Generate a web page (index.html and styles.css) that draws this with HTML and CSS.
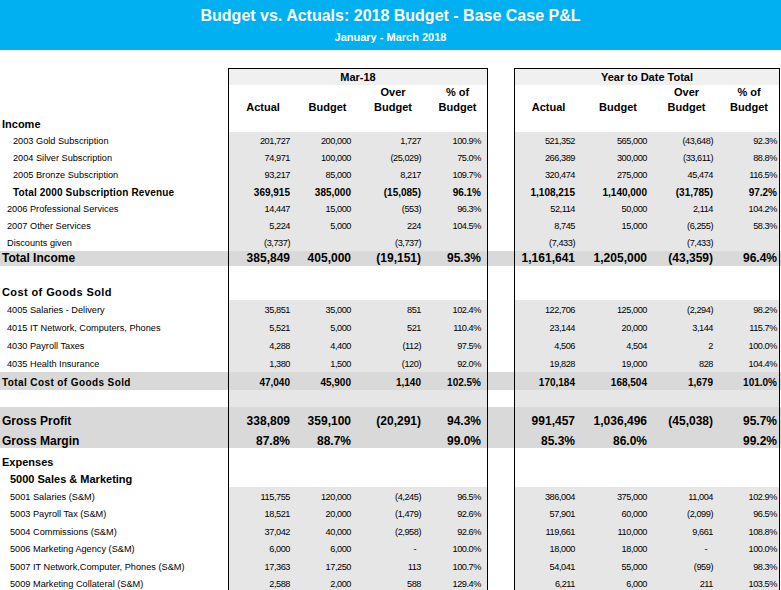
FILE: index.html
```html
<!DOCTYPE html>
<html lang="en">
<head>
<meta charset="utf-8">
<title>Budget vs. Actuals</title>
<link rel="stylesheet" href="styles.css">
</head>
<body>
<header class="banner">
  <h1>Budget vs. Actuals: 2018 Budget - Base Case P&amp;L</h1>
  <p>January - March 2018</p>
</header>
<main class="sheet">
  <div class="row h1row">
    <div class="lab"></div>
    <div class="box b1 top"><span class="span">Mar-18</span></div>
    <div class="gap"></div>
    <div class="box b2 top"><span class="span">Year to Date Total</span></div>
  </div>
  <div class="row h2row">
    <div class="lab"></div>
    <div class="box b1"><span>Actual</span><span>Budget</span><span>Over<br>Budget</span><span>% of<br>Budget</span></div>
    <div class="gap"></div>
    <div class="box b2"><span>Actual</span><span>Budget</span><span>Over<br>Budget</span><span>% of<br>Budget</span></div>
  </div>
  <div class="row r17 sect">
    <div class="lab i0">Income</div>
    <div class="box b1"></div><div class="gap"></div><div class="box b2"></div>
  </div>
  <div class="row r17 data">
    <div class="lab i3">2003 Gold Subscription</div>
    <div class="box b1"><span>201,727</span><span>200,000</span><span>1,727</span><span>100.9%</span></div>
    <div class="gap"></div>
    <div class="box b2"><span>521,352</span><span>565,000</span><span>(43,648)</span><span>92.3%</span></div>
  </div>
  <div class="row r17 data">
    <div class="lab i3">2004 Silver Subscription</div>
    <div class="box b1"><span>74,971</span><span>100,000</span><span>(25,029)</span><span>75.0%</span></div>
    <div class="gap"></div>
    <div class="box b2"><span>266,389</span><span>300,000</span><span>(33,611)</span><span>88.8%</span></div>
  </div>
  <div class="row r17 data">
    <div class="lab i3">2005 Bronze Subscription</div>
    <div class="box b1"><span>93,217</span><span>85,000</span><span>8,217</span><span>109.7%</span></div>
    <div class="gap"></div>
    <div class="box b2"><span>320,474</span><span>275,000</span><span>45,474</span><span>116.5%</span></div>
  </div>
  <div class="row r17 data sub">
    <div class="lab i3">Total 2000 Subscription Revenue</div>
    <div class="box b1"><span>369,915</span><span>385,000</span><span>(15,085)</span><span>96.1%</span></div>
    <div class="gap"></div>
    <div class="box b2"><span>1,108,215</span><span>1,140,000</span><span>(31,785)</span><span>97.2%</span></div>
  </div>
  <div class="row r17 data">
    <div class="lab i1">2006 Professional Services</div>
    <div class="box b1"><span>14,447</span><span>15,000</span><span>(553)</span><span>96.3%</span></div>
    <div class="gap"></div>
    <div class="box b2"><span>52,114</span><span>50,000</span><span>2,114</span><span>104.2%</span></div>
  </div>
  <div class="row r17 data">
    <div class="lab i1">2007 Other Services</div>
    <div class="box b1"><span>5,224</span><span>5,000</span><span>224</span><span>104.5%</span></div>
    <div class="gap"></div>
    <div class="box b2"><span>8,745</span><span>15,000</span><span>(6,255)</span><span>58.3%</span></div>
  </div>
  <div class="row r17 data">
    <div class="lab i1">Discounts given</div>
    <div class="box b1"><span>(3,737)</span><span></span><span>(3,737)</span><span></span></div>
    <div class="gap"></div>
    <div class="box b2"><span>(7,433)</span><span></span><span>(7,433)</span><span></span></div>
  </div>
  <div class="row r15 tot big">
    <div class="lab i0">Total Income</div>
    <div class="box b1"><span>385,849</span><span>405,000</span><span>(19,151)</span><span>95.3%</span></div>
    <div class="gap"></div>
    <div class="box b2"><span>1,161,641</span><span>1,205,000</span><span>(43,359)</span><span>96.4%</span></div>
  </div>
  <div class="row r17">
    <div class="lab"></div>
    <div class="box b1"></div><div class="gap"></div><div class="box b2"></div>
  </div>
  <div class="row r17 sect">
    <div class="lab i0 wide">Cost of Goods Sold</div>
    <div class="box b1"></div><div class="gap"></div><div class="box b2"></div>
  </div>
  <div class="row r18 data">
    <div class="lab i1">4005 Salaries - Delivery</div>
    <div class="box b1"><span>35,851</span><span>35,000</span><span>851</span><span>102.4%</span></div>
    <div class="gap"></div>
    <div class="box b2"><span>122,706</span><span>125,000</span><span>(2,294)</span><span>98.2%</span></div>
  </div>
  <div class="row r18 data">
    <div class="lab i1">4015 IT Network, Computers, Phones</div>
    <div class="box b1"><span>5,521</span><span>5,000</span><span>521</span><span>110.4%</span></div>
    <div class="gap"></div>
    <div class="box b2"><span>23,144</span><span>20,000</span><span>3,144</span><span>115.7%</span></div>
  </div>
  <div class="row r18 data">
    <div class="lab i1">4030 Payroll Taxes</div>
    <div class="box b1"><span>4,288</span><span>4,400</span><span>(112)</span><span>97.5%</span></div>
    <div class="gap"></div>
    <div class="box b2"><span>4,506</span><span>4,504</span><span>2</span><span>100.0%</span></div>
  </div>
  <div class="row r18 data">
    <div class="lab i1">4035 Health Insurance</div>
    <div class="box b1"><span>1,380</span><span>1,500</span><span>(120)</span><span>92.0%</span></div>
    <div class="gap"></div>
    <div class="box b2"><span>19,828</span><span>19,000</span><span>828</span><span>104.4%</span></div>
  </div>
  <div class="row r18 tot sub">
    <div class="lab i0 wide">Total Cost of Goods Sold</div>
    <div class="box b1"><span>47,040</span><span>45,900</span><span>1,140</span><span>102.5%</span></div>
    <div class="gap"></div>
    <div class="box b2"><span>170,184</span><span>168,504</span><span>1,679</span><span>101.0%</span></div>
  </div>
  <div class="row r17 data">
    <div class="lab"></div>
    <div class="box b1"></div><div class="gap"></div><div class="box b2"></div>
  </div>
  <div class="row gp tot big">
    <div class="lab i0">Gross Profit</div>
    <div class="box b1"><span>338,809</span><span>359,100</span><span>(20,291)</span><span>94.3%</span></div>
    <div class="gap"></div>
    <div class="box b2"><span>991,457</span><span>1,036,496</span><span>(45,038)</span><span>95.7%</span></div>
  </div>
  <div class="row gm tot big">
    <div class="lab i0">Gross Margin</div>
    <div class="box b1"><span>87.8%</span><span>88.7%</span><span></span><span>99.0%</span></div>
    <div class="gap"></div>
    <div class="box b2"><span>85.3%</span><span>86.0%</span><span></span><span>99.2%</span></div>
  </div>
  <div class="row r22 sect">
    <div class="lab i0">Expenses</div>
    <div class="box b1"></div><div class="gap"></div><div class="box b2"></div>
  </div>
  <div class="row r17 sect">
    <div class="lab i2">5000 Sales &amp; Marketing</div>
    <div class="box b1"></div><div class="gap"></div><div class="box b2"></div>
  </div>
  <div class="row r18 data">
    <div class="lab i2">5001 Salaries (S&amp;M)</div>
    <div class="box b1"><span>115,755</span><span>120,000</span><span>(4,245)</span><span>96.5%</span></div>
    <div class="gap"></div>
    <div class="box b2"><span>386,004</span><span>375,000</span><span>11,004</span><span>102.9%</span></div>
  </div>
  <div class="row r17 data">
    <div class="lab i2">5003 Payroll Tax (S&amp;M)</div>
    <div class="box b1"><span>18,521</span><span>20,000</span><span>(1,479)</span><span>92.6%</span></div>
    <div class="gap"></div>
    <div class="box b2"><span>57,901</span><span>60,000</span><span>(2,099)</span><span>96.5%</span></div>
  </div>
  <div class="row r18 data">
    <div class="lab i2">5004 Commissions (S&amp;M)</div>
    <div class="box b1"><span>37,042</span><span>40,000</span><span>(2,958)</span><span>92.6%</span></div>
    <div class="gap"></div>
    <div class="box b2"><span>119,661</span><span>110,000</span><span>9,661</span><span>108.8%</span></div>
  </div>
  <div class="row r17 data">
    <div class="lab i2">5006 Marketing Agency (S&amp;M)</div>
    <div class="box b1"><span>6,000</span><span>6,000</span><span class="dash">-</span><span>100.0%</span></div>
    <div class="gap"></div>
    <div class="box b2"><span>18,000</span><span>18,000</span><span class="dash">-</span><span>100.0%</span></div>
  </div>
  <div class="row r18 data">
    <div class="lab i2">5007 IT Network,Computer, Phones (S&amp;M)</div>
    <div class="box b1"><span>17,363</span><span>17,250</span><span>113</span><span>100.7%</span></div>
    <div class="gap"></div>
    <div class="box b2"><span>54,041</span><span>55,000</span><span>(959)</span><span>98.3%</span></div>
  </div>
  <div class="row r17 data">
    <div class="lab i2">5009 Marketing Collateral (S&amp;M)</div>
    <div class="box b1"><span>2,588</span><span>2,000</span><span>588</span><span>129.4%</span></div>
    <div class="gap"></div>
    <div class="box b2"><span>6,211</span><span>6,000</span><span>211</span><span>103.5%</span></div>
  </div>
</main>
</body>
</html>
```

FILE: styles.css
```css
* { box-sizing: border-box; margin: 0; padding: 0; }

body {
  margin: 0;
  width: 781px;
  font-family: "Liberation Sans", Arial, sans-serif;
  color: #000;
  background: #fff;
}

.banner {
  height: 50px;
  background: #00b0f0;
  color: #fff;
  text-align: center;
  padding-top: 6px;
}
.banner h1 { font-size: 16px; font-weight: bold; line-height: 20px; }
.banner p { font-size: 11px; font-weight: bold; line-height: 14px; margin-top: 4px; }

.sheet { margin-top: 18px; }

.row { display: flex; height: 17px; }
.r15 { height: 15px; }
.r17 { height: 17px; }
.r18 { height: 18px; }
.r22 { height: 22px; }
.gp { height: 27px; }
.gm { height: 14px; }

.lab {
  width: 228px;
  flex: none;
  display: flex;
  align-items: flex-end;
  font-size: 9.2px;
  line-height: 15px;
  white-space: nowrap;
}
.i0 { padding-left: 2px; }
.i1 { padding-left: 7px; }
.i2 { padding-left: 10px; }
.i3 { padding-left: 13px; }

.gap { width: 26px; flex: none; }

.box {
  flex: none;
  display: grid;
  border-left: 1px solid #000;
  border-right: 1px solid #000;
}
.b1 { width: 260px; grid-template-columns: 68px 61px 70px 59px; }
.b2 { width: 266px; grid-template-columns: 67px 72px 65px 60px; }
.top { border-top: 1px solid #000; }

.box > span {
  display: flex;
  align-items: flex-end;
  justify-content: flex-end;
  font-size: 9.2px;
  letter-spacing: -0.45px;
  line-height: 15px;
  white-space: nowrap;
  padding-right: 7px;
}
.b1 > span:nth-child(4) { padding-right: 6px; }
.b2 > span:nth-child(3) { padding-right: 6px; }
.b2 > span:nth-child(4) { padding-right: 2px; }
.box > span.dash { padding-right: 12px; }

/* header rows */
.h1row { height: 17px; }
.h1row .box { background: #f0f0f0; display: flex; align-items: center; justify-content: center; }
.h1row .box > span.span {
  padding: 0;
  justify-content: center;
  font-size: 11px;
  font-weight: bold;
  letter-spacing: 0;
  line-height: 16px;
}
.h2row { height: 30px; }
.h2row .box > span,
.h2row .b1 > span:nth-child(4),
.h2row .b2 > span:nth-child(3),
.h2row .b2 > span:nth-child(4) {
  justify-content: center;
  text-align: center;
  padding-right: 0;
  font-size: 11px;
  font-weight: bold;
  letter-spacing: 0;
  line-height: 15px;
}

/* row kinds */
.data .box { background: #e6e6e6; }
.tot { background: #d9d9d9; }

.sect .lab { font-size: 11px; font-weight: bold; }
.sect .lab.wide { letter-spacing: 0.4px; }

.sub .lab { font-size: 10px; font-weight: bold; letter-spacing: 0.15px; }
.sub .lab.wide { letter-spacing: 0.4px; }
.sub .box > span { font-size: 10px; font-weight: bold; letter-spacing: 0; }

.big .lab { font-size: 12px; font-weight: bold; line-height: 15px; }
.big .box > span { font-size: 12px; font-weight: bold; letter-spacing: 0; line-height: 15px; }
.gp .lab, .gp .box > span { padding-bottom: 5px; line-height: 16px; }
.gm .lab, .gm .box > span { line-height: 14px; }
```
